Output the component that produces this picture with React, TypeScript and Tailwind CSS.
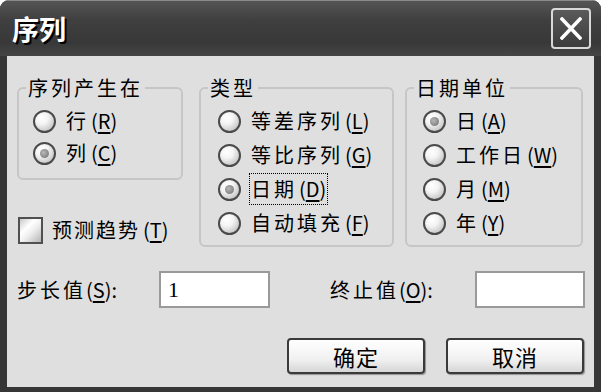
import React from 'react';

const cjk = "font-['Noto_Sans_CJK_SC','Noto_Sans',sans-serif]";

const Radio = ({ checked }: { checked?: boolean }) => (
  <span className="flex h-[23px] w-[23px] shrink-0 items-center justify-center rounded-full border-2 border-[#4a4a4a] bg-[radial-gradient(circle_at_35%_30%,#ffffff_0%,#f4f4f4_35%,#b0b0b0_100%)]">
    {checked && (
      <span className="h-[9px] w-[9px] rounded-full bg-[radial-gradient(circle_at_40%_40%,#b8b8b8,#6c6c6c)]" />
    )}
  </span>
);

const Option = ({
  label,
  hotkey,
  checked,
  focused,
}: {
  label: string;
  hotkey: string;
  checked?: boolean;
  focused?: boolean;
}) => (
  <div className="flex h-[34px] items-center">
    <Radio checked={checked} />
    <span
      className={
        focused
          ? 'ml-[8px] flex h-[32px] items-center border border-dotted border-black px-[1px]'
          : 'ml-[8px] flex h-[32px] items-center border border-transparent px-[1px]'
      }
    >
      <span className="tracking-[3px]">{label}</span>
      <span className="ml-[2px]">
        (<span className="underline underline-offset-[3px]">{hotkey}</span>)
      </span>
    </span>
  </div>
);

const Group = ({ title, className, children }: { title: string; className: string; children: React.ReactNode }) => (
  <fieldset className={`rounded-[6px] border-2 border-[#c6c6c6] ${className}`}>
    <legend className="ml-[7px] px-[2px] text-[20px] leading-[24px] tracking-[3px]">{title}</legend>
    {children}
  </fieldset>
);

const Button = ({ children }: { children: React.ReactNode }) => (
  <button className="flex h-[36px] w-[138px] items-center justify-center rounded-[4px] border-2 border-[#3a3a3a] bg-[linear-gradient(#ffffff,#f1f1f1_60%,#d6d6d6)] text-[22px] tracking-[1px] shadow-[1px_1px_1px_rgba(0,0,0,0.35)]">
    {children}
  </button>
);

export default function App() {
  return (
    <div className={`h-[392px] w-[601px] bg-white ${cjk} text-black`}>
      <div className="flex h-full w-full flex-col overflow-hidden rounded-t-[9px] bg-[#363636]">
        {/* Title bar */}
        <div className="flex h-[56px] shrink-0 items-center justify-between border-t border-[#8a8a8a] bg-[linear-gradient(#555555,#3f3f3f_35%,#383838_75%,#454545)] pl-[12px] pr-[10px]">
          <span className="text-[27px] font-bold leading-none text-white [text-shadow:2px_2px_0_#000]">序列</span>
          <div className="flex h-[41px] w-[40px] items-center justify-center rounded-[4px] border-2 border-[#d8d8d8] bg-[linear-gradient(#5a5a5a,#3c3c3c)]">
            <svg width="22" height="23" viewBox="0 0 22 23">
              <path d="M2 2 L20 21 M20 2 L2 21" stroke="#ffffff" strokeWidth="3.5" strokeLinecap="square" />
            </svg>
          </div>
        </div>

        {/* Body */}
        <div className="mx-[7px] mb-[5px] flex flex-1 flex-col bg-[#dfdfdf] pt-[20px] text-[20px]">
          <div className="flex items-start">
            <div className="ml-[10px] flex w-[166px] flex-col">
              <Group title="序列产生在" className="h-[104px]">
                <div className="flex flex-col pl-[14px] pt-[4px]">
                  <Option label="行" hotkey="R" />
                  <div className="-mt-[2px]">
                    <Option label="列" hotkey="C" checked />
                  </div>
                </div>
              </Group>
              <div className="ml-[1px] mt-[35px] flex items-center">
                <span className="h-[27px] w-[25px] border-2 border-[#505050] bg-[linear-gradient(135deg,#c8c8c8,#ffffff_35%,#f0f0f0_55%,#b4b4b4)]" />
                <span className="ml-[9px] tracking-[2px]">预测趋势</span>
                <span className="ml-[3px]">
                  (<span className="underline underline-offset-[3px]">T</span>)
                </span>
              </div>
            </div>

            <Group title="类型" className="ml-[16px] h-[171px] w-[195px]">
              <div className="flex flex-col pl-[17px] pt-[4px]">
                <Option label="等差序列" hotkey="L" />
                <Option label="等比序列" hotkey="G" />
                <Option label="日期" hotkey="D" checked focused />
                <Option label="自动填充" hotkey="F" />
              </div>
            </Group>

            <Group title="日期单位" className="ml-[11px] h-[171px] w-[178px]">
              <div className="flex flex-col pl-[16px] pt-[4px]">
                <Option label="日" hotkey="A" checked />
                <Option label="工作日" hotkey="W" />
                <Option label="月" hotkey="M" />
                <Option label="年" hotkey="Y" />
              </div>
            </Group>
          </div>

          {/* Step / stop values */}
          <div className="mt-[24px] flex items-center pl-[10px]">
            <div className="flex w-[142px] items-center">
              <span className="tracking-[3px]">步长值</span>
              <span>
                (<span className="underline underline-offset-[3px]">S</span>):
              </span>
            </div>
            <div className="flex h-[37px] w-[111px] items-center border-2 border-[#9a9a9a] bg-white pl-[7px] font-['Liberation_Serif',serif] text-[22px]">
              1
            </div>
            <div className="ml-[60px] flex w-[145px] items-center">
              <span className="tracking-[3px]">终止值</span>
              <span>
                (<span className="underline underline-offset-[3px]">O</span>):
              </span>
            </div>
            <div className="h-[37px] w-[110px] border-2 border-[#9a9a9a] bg-white" />
          </div>

          {/* Buttons */}
          <div className="mt-[30px] flex justify-end gap-[21px] pr-[10px]">
            <Button>确定</Button>
            <Button>取消</Button>
          </div>
        </div>
      </div>
    </div>
  );
}
